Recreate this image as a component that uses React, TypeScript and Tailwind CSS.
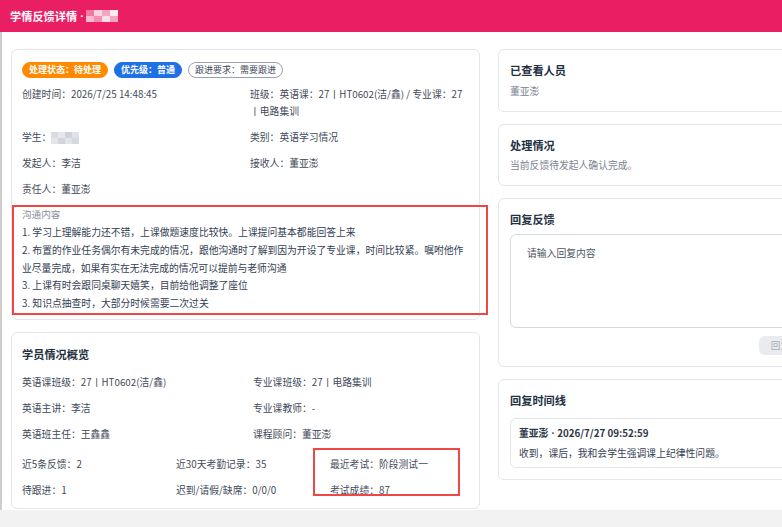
import React from "react";

// small pixelated block used to hide personal names
const Mosaic = ({tones, cell}: { tones: string[][]; cell: string }) => (
  <span className="inline-flex flex-col align-middle blur-[0.6px]">
    {tones.map((row, r) => (
      <span key={r} className="flex">
        {row.map((c, i) => (
          <span key={i} className={`${cell} ${c}`}/>
        ))}
      </span>
    ))}
  </span>
);

// latin middle dot, the CJK one is too wide
const Dot = () => <span className="font-['Noto_Sans',sans-serif] mx-[3px]">·</span>;

const Badge = ({text, tone}: { text: string; tone: "orange" | "blue" | "plain" }) => {
  const styles = {
    orange: "bg-[#ff8a00] text-white font-bold border-[#ff8a00]",
    blue: "bg-[#1f6fe5] text-white font-bold border-[#1f6fe5]",
    plain: "bg-white text-[#3f4a5a] border-[#9aa1ab]",
  };
  return (
    <span className={`h-4 px-[6px] rounded-full border text-[9px] leading-[14px] inline-flex items-center ${styles[tone]}`}>
      {text}
    </span>
  );
};

const SideCard = ({title, children}: { title: string; children: React.ReactNode }) => (
  <div className="border border-[#e3e6ea] rounded-md p-[11px] bg-white">
    <div className="text-[11.2px] leading-[18px] font-bold text-[#243042]">{title}</div>
    {children}
  </div>
);

export default function App() {
  return (
    <div className="w-full h-[527px] bg-[#f2f2f2] overflow-hidden font-['Noto_Sans_CJK_SC','Noto_Sans',sans-serif] text-[9.8px] text-[#3f4a5a]">
      {/* top bar */}
      <div className="h-8 bg-[#e91e63] px-[10px] flex items-center text-white text-[11.2px] font-bold">
        <span>学情反馈详情</span>
        <Dot/>
        <Mosaic
          cell="w-[8px] h-[6px]"
          tones={[
            ["bg-white/40", "bg-white/80", "bg-white/60", "bg-white/90"],
            ["bg-white/70", "bg-white/50", "bg-white/85", "bg-white/60"],
          ]}
        />
      </div>

      <div className="h-[478px] bg-white border-l-2 border-[#cdcdcd] pl-[9px] pt-[17px] flex gap-[18px]">
        {/* left column */}
        <div className="w-[469px] shrink-0 flex flex-col gap-3">
          <div className="border border-[#e3e6ea] rounded-md px-[10px] pt-3 pb-[6px]">
            <div className="flex gap-[6px]">
              <Badge text="处理状态：待处理" tone="orange"/>
              <Badge text="优先级：普通" tone="blue"/>
              <Badge text="跟进要求：需要跟进" tone="plain"/>
            </div>

            <div className="mt-2 grid grid-cols-2 gap-x-[9px] gap-y-[9px] leading-[17px]">
              <div>创建时间：2026/7/25 14:48:45</div>
              <div>班级：英语课：27丨HT0602(洁/鑫) / 专业课：27丨电路集训</div>
              <div className="flex items-center">
                学生：
                <Mosaic
                  cell="w-[7px] h-[6px]"
                  tones={[
                    ["bg-[#d9dce1]", "bg-[#e6e8eb]", "bg-[#cfd3d9]", "bg-[#dfe2e6]"],
                    ["bg-[#e3e5e9]", "bg-[#d2d6dc]", "bg-[#e0e3e7]", "bg-[#d6d9de]"],
                  ]}
                />
              </div>
              <div>类别：英语学习情况</div>
              <div>发起人：李洁</div>
              <div>接收人：董亚澎</div>
              <div>责任人：董亚澎</div>
            </div>

            {/* communication notes */}
            <div className="relative mt-2">
              <div className="text-[9.6px] leading-4 text-[#8a909a]">沟通内容</div>
              <div className="mt-[2px] leading-[17.8px] text-[#344054]">
                <div>1. 学习上理解能力还不错，上课做题速度比较快。上课提问基本都能回答上来</div>
                <div>2. 布置的作业任务偶尔有未完成的情况，跟他沟通时了解到因为开设了专业课，时间比较紧。嘱咐他作业尽量完成，如果有实在无法完成的情况可以提前与老师沟通</div>
                <div>3. 上课有时会跟同桌聊天嬉笑，目前给他调整了座位</div>
                <div>3. 知识点抽查时，大部分时候需要二次过关</div>
              </div>
              <div className="absolute -left-[10px] -top-px -right-[19px] -bottom-[2px] border-2 border-[#ef4646] pointer-events-none"/>
            </div>
          </div>

          <div className="border border-[#e3e6ea] rounded-md px-[10px] pt-3 pb-[9px]">
            <div className="text-[11.2px] leading-[18px] font-bold text-[#243042]">学员情况概览</div>
            <div className="mt-[11px] grid grid-cols-2 gap-x-[15px] gap-y-[9px] leading-[17px]">
              <div>英语课班级：27丨HT0602(洁/鑫)</div>
              <div>专业课班级：27丨电路集训</div>
              <div>英语主讲：李洁</div>
              <div>专业课教师：-</div>
              <div>英语班主任：王鑫鑫</div>
              <div>课程顾问：董亚澎</div>
            </div>
            <div className="relative mt-[13px] grid grid-cols-3 gap-x-[15px] gap-y-[9px] leading-[17px]">
              <div>近5条反馈：2</div>
              <div>近30天考勤记录：35</div>
              <div>最近考试：阶段测试一</div>
              <div>待跟进：1</div>
              <div>迟到/请假/缺席：0/0/0</div>
              <div>考试成绩：87</div>
              <div className="absolute left-[291px] -top-[7.5px] w-[147px] h-[48px] border-2 border-[#ef4646] pointer-events-none"/>
            </div>
          </div>
        </div>

        {/* right column */}
        <div className="w-[316px] shrink-0 flex flex-col gap-3">
          <SideCard title="已查看人员">
            <div className="mt-[3.5px] leading-[17px] text-[#7b8494]">董亚澎</div>
          </SideCard>

          <SideCard title="处理情况">
            <div className="mt-[3.5px] leading-[17px] text-[#7b8494]">当前反馈待发起人确认完成。</div>
          </SideCard>

          <SideCard title="回复反馈">
            <textarea
              placeholder="请输入回复内容"
              className="mt-[6px] block w-full h-[94px] resize-none border border-[#d5d9df] rounded-md px-4 pt-[10px] leading-[17px] text-[9.8px] placeholder:text-[#4b5563] outline-none"
            />
            <div className="mt-2 flex justify-end">
              <button className="h-[19px] px-3 rounded-md bg-[#e9ebef] text-[#a4abb6] text-[9.6px] leading-[19px]">
                回复
              </button>
            </div>
          </SideCard>

          <SideCard title="回复时间线">
            <div className="mt-[9px] border border-[#e3e6ea] rounded-md px-[8px] pt-[6px] pb-[6px]">
              <div className="leading-4 font-bold text-[#2d3748]">董亚澎<Dot/>2026/7/27 09:52:59</div>
              <div className="mt-[3px] leading-4 text-[#344054]">收到，课后，我和会学生强调课上纪律性问题。</div>
            </div>
          </SideCard>
        </div>
      </div>
    </div>
  );
}
